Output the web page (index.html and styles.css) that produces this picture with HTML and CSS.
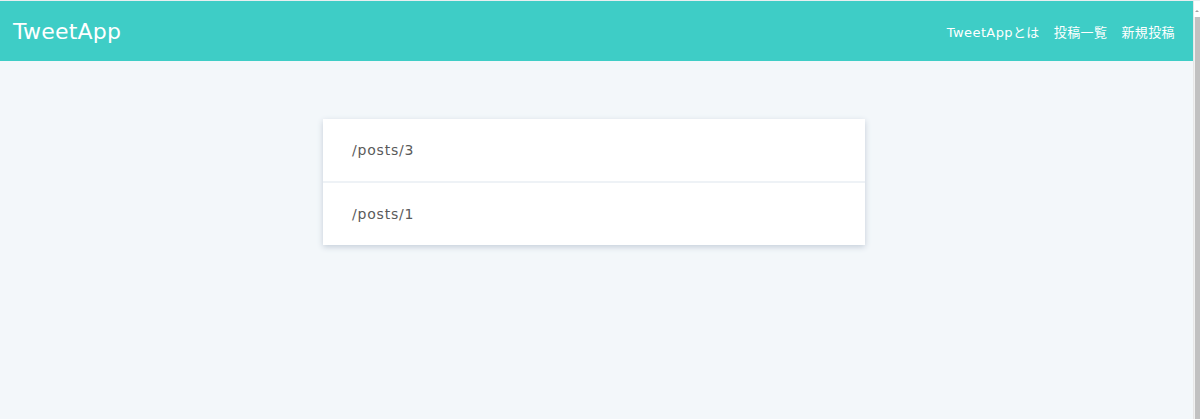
FILE: index.html
```html
<!DOCTYPE html>
<html lang="ja">
<head>
  <meta charset="UTF-8">
  <meta name="viewport" content="width=device-width, initial-scale=1.0">
  <title>TweetApp</title>
  <link rel="stylesheet" href="styles.css">
</head>
<body>

<div class="window">
  <div class="page">
    <header class="header">
      <div class="header-logo">TweetApp</div>
      <ul class="header-menus">
        <li><a href="/about">TweetAppとは</a></li>
        <li><a href="/posts/index">投稿一覧</a></li>
        <li><a href="/posts/new">新規投稿</a></li>
      </ul>
    </header>

    <main class="main">
      <div class="posts-index">
        <div class="posts-index-item">/posts/3</div>
        <div class="posts-index-item">/posts/1</div>
      </div>
    </main>
  </div>

  <!-- page scrollbar -->
  <div class="scrollbar">
    <div class="scrollbar-arrow"></div>
    <div class="scrollbar-thumb"></div>
  </div>
</div>

</body>
</html>
```

FILE: styles.css
```css
html, body {
  margin: 0;
  padding: 0;
  height: 100%;
}
body {
  font-family: 'DejaVu Sans', 'Noto Sans CJK JP', sans-serif;
  background-color: #f3f7fa;
  overflow: hidden;
}
.window {
  display: flex;
  height: 100%;
  border-top: 1px solid #e9eef0;
  box-sizing: border-box;
}
.page {
  flex: 1;
  display: flex;
  flex-direction: column;
}
.header {
  background-color: #3ecdc6;
  height: 60px;
  display: flex;
  align-items: center;
  justify-content: space-between;
  padding: 0 18px 0 13px;
}
.header-logo {
  color: white;
  font-size: 22px;
  letter-spacing: 0.2px;
}
.header-menus {
  list-style: none;
  margin: 0;
  padding: 0;
  display: flex;
  gap: 14px;
  padding-top: 1px;
}
.header-menus a {
  color: white;
  text-decoration: none;
  font-size: 13px;
  letter-spacing: 0.4px;
}
.main {
  flex: 1;
  padding-top: 58px;
}
.posts-index {
  width: 542px;
  margin-left: 323px;
  background: white;
  box-shadow: 0 2px 6px #c5ced9;
}
.posts-index-item {
  height: 62px;
  padding-left: 29px;
  padding-bottom: 1px;
  box-sizing: border-box;
  display: flex;
  align-items: center;
  color: #5a5a5a;
  font-size: 14px;
  letter-spacing: 0.8px;
}
.posts-index-item + .posts-index-item {
  height: 64px;
  border-top: 2px solid #eef2f6;
}
.scrollbar {
  width: 6px;
  display: flex;
  flex-direction: column;
  background: #f1f1f1;
  border-left: 1px solid #e6e6e6;
}
.scrollbar-arrow {
  height: 16px;
  background: white;
  position: relative;
}
.scrollbar-arrow::after {
  content: "";
  position: absolute;
  left: 1px;
  top: 9px;
  border-left: 2px solid transparent;
  border-right: 2px solid transparent;
  border-bottom: 2px solid #a3a3a3;
}
.scrollbar-thumb {
  flex: 1;
  background: #c1c1c1;
  margin-left: 1px;
}
```
